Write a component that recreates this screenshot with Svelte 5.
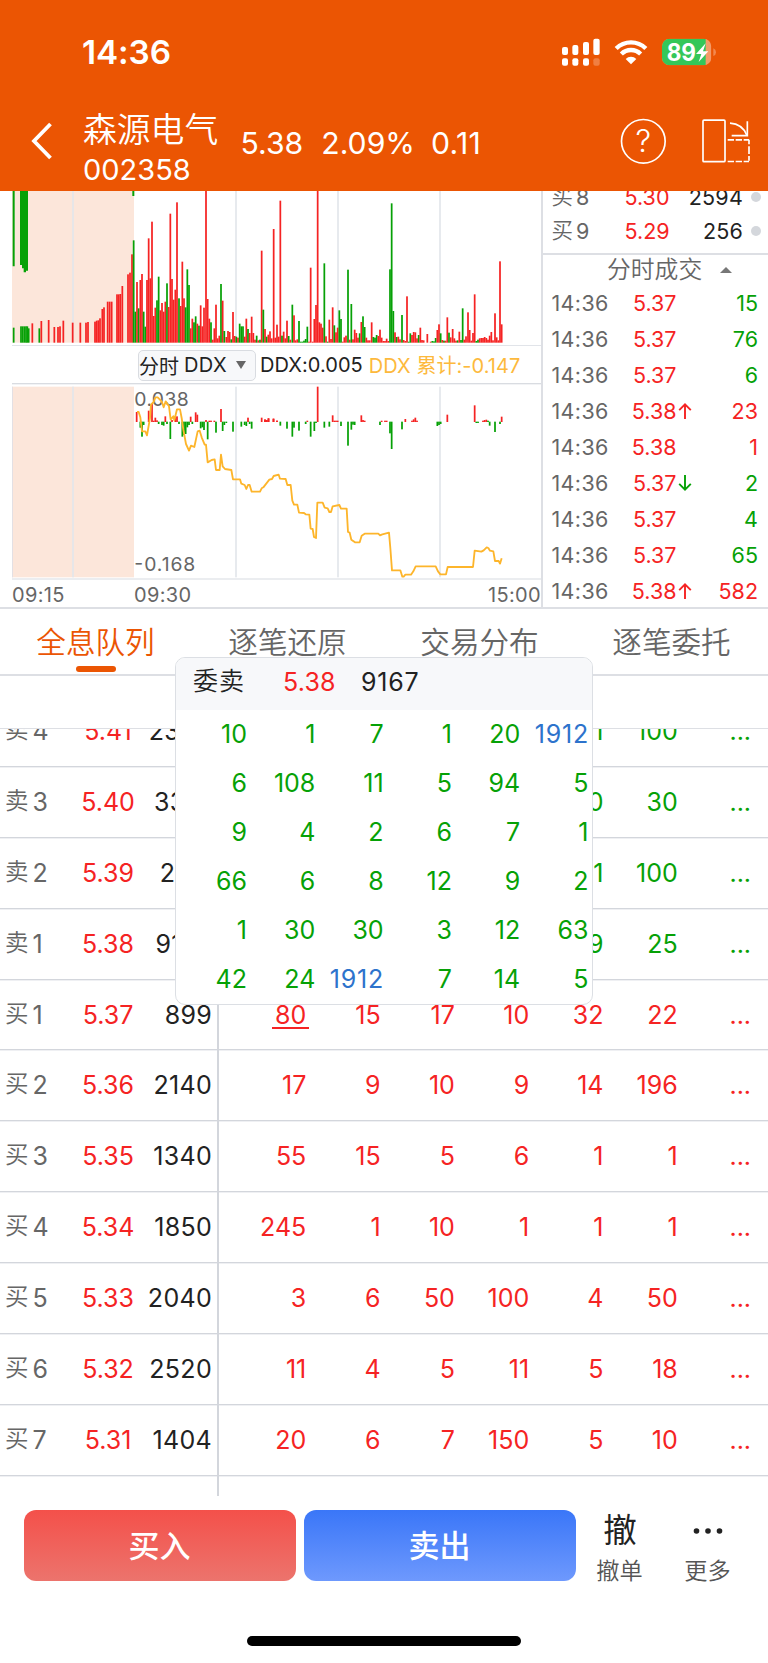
<script>
  const parse = (s) =>
    s.trim().split(/\s+/).map((t) => {
      const m = t.match(/^(\d+):(\d+)([rg])$/);
      return { x: +m[1], y: +m[2], up: m[3] === 'r' };
    });
  const shift = (list, dx) => list.map((b) => ({ ...b, x: b.x + dx }));

  const volume = [
    ...parse(`41:428g 63:424g 68:424g 73:424g 78:424g 82:424g 86:430g 97:415r 118:430g 124:408r 146:405r 163:426r
      174:426r 180:424r 190:407r 218:413r 241:413r 258:413r 264:411r 285:410r 290:407r 295:406r 300:400r 307:372r
      312:367r 323:350r 329:350r 335:350r 351:328r 356:328r 361:327r 367:303r 384:268r 390:263r 396:208r 401:166g
      406:380g 411:291r 416:370g 421:285r 426:267r 431:380g 436:425g 441:285r 446:160r 451:280r 456:110r 461:393r
      466:368r 471:346g 476:275g 481:376r 486:354r 491:380r 496:350r 501:295g 506:366r 511:86r 516:282r 521:344r
      526:314r 531:52r 537:340g 542:363r 547:230r 552:340r 557:367g 562:253g 567:300g 572:430r 577:401r 582:412g
      587:394g 592:416r 597:422g 602:361r 607:424r 612:368r 618:15r 623:342r 628:401r 633:412g 638:464r 643:430r
      648:359r 653:460r 658:452r 663:297g 668:347r 673:438g 679:456r 684:438r 689:441r 694:463g 699:381r 704:453r
      709:455g 714:458r 719:416g 724:424g 729:424g 734:455r 739:401r 744:432g 749:444r 755:395r 760:444r 765:464r
      770:452g 775:466r 780:464g`),
    ...shift(parse(`5:197r 10:374g 15:432r 20:455g 25:449r 30:439r 35:460r 41:132r 46:458r 51:419r 56:455r 61:47r
      66:452g 71:440r 76:460r 81:407r 86:453g 91:464r 97:359g 102:391r 107:466r 112:463r 117:408g 122:470g 127:470g
      132:467g 137:462g 142:425g 147:470r 152:248r 158:470r 163:402r 168:360r 173:15r 178:412r 183:416r 188:428r
      193:235g 198:454r 203:470g 208:404r 213:462r 218:367r 223:421g 228:442r 233:428r 238:376g 243:402g 248:470r
      253:457r 258:452r 264:254g 269:464r 274:357g 279:463r 284:434r 289:444r 294:458r 299:445g 304:411r 309:394g
      314:426g 319:458r 324:466r 329:466r 335:412r 340:456g 345:458g 350:450g 355:453r 360:434r 365:458r 370:468r
      375:468r 380:461r 385:468r 390:253g 395:55g 400:378g 405:442r 410:456g 415:455r 420:463r 426:390g 431:465r
      436:468r 441:334r 446:470g 451:445g 456:450r 461:441r 466:442r 471:460r 476:450g 481:428r 486:465r 491:466r
      502:447r 512:470r 517:468g 522:469g 527:459g 532:435r 537:418r 542:445g 547:465r 552:467g 557:467r 562:397r
      567:443g 572:457r 578:432r 583:460r 588:467r 593:466g 598:440r 603:465g 608:370g 613:464r 618:454r 624:382r
      629:435r 634:467r 639:444r 644:328r 649:468g 654:464g 659:460r 664:459r 669:459r 674:456r 679:459r 684:464r
      689:452r 694:441r 699:466r 705:385r 710:457r 715:466r 720:229r 725:418r`), 780),
  ];

  const ddx = [
    ...parse(`410:112r 421:158g 426:185g 431:150g 446:108r 456:88r 461:138r 466:129r 471:137r 476:147g 486:150g
      491:152g 496:125r 501:147g 511:192g 516:136r 526:127r 531:125r 537:147g 547:185g 552:180g 557:177g 562:157g
      567:150g 572:126r 577:147g 587:113r 592:120r 602:160g 607:157g 612:165g 618:136r 623:193g 628:138r 633:138r
      643:138r 648:173g 663:103r 668:168g 673:150g 679:144g 699:170g 724:155g 734:150g 739:153g 744:129r 749:147g
      755:161g 785:129r 795:134r 800:136r 806:131r 820:132r 831:138r`),
    ...shift(parse(`15:135r 20:136r 25:131r 41:132r 51:138r 61:152g 81:161g 97:185g 102:158g 117:167g 137:147g
      142:138r 152:185g 163:168g 168:144g 173:36r 193:158g 208:155g 218:122r 223:138r 228:138r 233:138r 243:153g
      264:212g 274:164g 279:149g 284:150g 304:122r 309:136r 314:138r 360:150g 365:138r 375:138r 380:138r 390:175g
      395:222g 426:163g 436:133r 456:138r 461:134r 466:129r 471:138r 532:153g 537:150g 542:147g 562:120r 644:92r
      649:144g 654:144g 669:138r 674:136r 679:135r 684:138g 689:152g 705:171g 720:147g 725:126r`), 780),
  ];

  const ddxLine =
    'M411,112 L416,112 421,128 426,170 436,170 441,182 450,130 453,90 461,82 466,68 473,68 485,80 491,98 497,80 507,95 512,135 520,125 523,137 531,104 540,104 545,130 550,165 558,208 567,228 573,213 583,217 593,170 599,168 605,188 614,210 618,210 623,263 635,256 644,254 648,286 659,286 663,240 668,275 675,283 694,286 699,314 720,314 724,327 734,331 739,343 744,331 749,331 755,351 780,351 785,341 790,338 808,315 816,313 821,304 836,300 840,312 857,313 862,331 872,331 877,378 882,390 892,390 897,414 912,415 917,419 928,420 932,462 938,463 942,487 948,490 952,384 968,384 974,399 983,401 988,412 993,412 998,395 1018,391 1023,402 1040,402 1044,472 1049,474 1054,495 1065,503 1079,503 1085,483 1094,477 1135,477 1140,482 1147,479 1167,474 1171,520 1176,587 1201,587 1207,606 1211,606 1216,600 1233,600 1240,590 1247,575 1307,575 1314,590 1321,599 1338,599 1343,577 1419,577 1424,528 1444,531 1451,527 1460,518 1465,520 1470,528 1480,530 1485,559 1496,559 1500,567 1505,551';

  const grid = [219, 708, 1014, 1320];

  const bids = [
    { n: 8, price: '5.30', qty: 2594 },
    { n: 9, price: '5.29', qty: 256 },
  ];

  const trades = [
    { p: '5.37', q: 15, side: 'g' },
    { p: '5.37', q: 76, side: 'g' },
    { p: '5.37', q: 6, side: 'g' },
    { p: '5.38', q: 23, side: 'r', dir: 'up' },
    { p: '5.38', q: 1, side: 'r' },
    { p: '5.37', q: 2, side: 'g', dir: 'down' },
    { p: '5.37', q: 4, side: 'g' },
    { p: '5.37', q: 65, side: 'g' },
    { p: '5.38', q: 582, side: 'r', dir: 'up' },
  ];

  const tabs = ['全息队列', '逐笔还原', '交易分布', '逐笔委托'];

  const queue = [
    { s: '卖', n: 4, p: '5.41', v: '2342', q: ['', '', '', '', 1, 100] },
    { s: '卖', n: 3, p: '5.40', v: '3310', q: ['', '', '', '', 0, 30] },
    { s: '卖', n: 2, p: '5.39', v: '2811', q: ['', '', '', '', 1, 100] },
    { s: '卖', n: 1, p: '5.38', v: '9167', q: ['', '', '', '', 9, 25] },
    { s: '买', n: 1, p: '5.37', v: '899', q: [80, 15, 17, 10, 32, 22] },
    { s: '买', n: 2, p: '5.36', v: '2140', q: [17, 9, 10, 9, 14, 196] },
    { s: '买', n: 3, p: '5.35', v: '1340', q: [55, 15, 5, 6, 1, 1] },
    { s: '买', n: 4, p: '5.34', v: '1850', q: [245, 1, 10, 1, 1, 1] },
    { s: '买', n: 5, p: '5.33', v: '2040', q: [3, 6, 50, 100, 4, 50] },
    { s: '买', n: 6, p: '5.32', v: '2520', q: [11, 4, 5, 11, 5, 18] },
    { s: '买', n: 7, p: '5.31', v: '1404', q: [20, 6, 7, 150, 5, 10] },
  ];

  const orders = [
    10, 1, 7, 1, 20, 1912,
    6, 108, 11, 5, 94, 5,
    9, 4, 2, 6, 7, 1,
    66, 6, 8, 12, 9, 2,
    1, 30, 30, 3, 12, 63,
    42, 24, 1912, 7, 14, 5,
  ];
</script>

<div class="app">
  <header>
    <div class="status">
      <span class="clock">14:36</span>
      <svg width="158" height="32" viewBox="30 30 474 96">
        <g fill="#fff">
          <rect x="36" y="63" width="18" height="24" rx="6" />
          <rect x="67" y="57" width="18" height="30" rx="6" />
          <rect x="99" y="48" width="18" height="39" rx="6" />
          <rect x="130" y="38" width="19" height="49" rx="6" />
          <rect x="36" y="97" width="18" height="22" rx="6" />
          <rect x="67" y="97" width="18" height="22" rx="6" />
          <rect x="99" y="97" width="18" height="22" rx="6" />
          <rect x="130" y="97" width="19" height="22" rx="6" opacity=".25" />
          <path d="M243 115 L227 99 A22 22 0 0 1 259 99 Z" />
        </g>
        <g fill="none" stroke="#fff" stroke-width="13">
          <path d="M198.500 67.500 A63 63 0 0 1 287.500 67.500" />
          <path d="M214 84 A41 41 0 0 1 272 84" />
        </g>
        <clipPath id="batt"><rect x="336" y="38" width="148" height="80" rx="23" /></clipPath>
        <g clip-path="url(#batt)">
          <rect x="336" y="38" width="148" height="80" fill="#f49b68" />
          <rect x="336" y="38" width="131" height="80" fill="#34c759" />
        </g>
        <path d="M490 67 Q498 70 498 78.500 T490 90 Z" fill="#f2894f" />
        <text x="350" y="104" font-size="71" font-weight="700" fill="#fff" textLength="88" lengthAdjust="spacingAndGlyphs">89</text>
        <path d="M467 52 L438 84 H454 L446 108 L475 76 H459 Z" fill="#fff" />
      </svg>
    </div>
    <div class="nav">
      <svg class="back" width="24" height="38" viewBox="0 0 24 38" fill="none" stroke="#fff" stroke-width="3.800">
        <path d="M20.500 2 L4 19 L20.500 36" />
      </svg>
      <div class="stock">
        <div class="name">森源电气</div>
        <div class="code">002358</div>
      </div>
      <div class="quote"><span>5.38</span><span>2.09%</span><span>0.11</span></div>
      <svg class="tools" width="130" height="46" viewBox="210 280 390 138" fill="none" stroke="#fff" stroke-width="5">
        <circle cx="280" cy="350" r="65.500" />
        <text x="280" y="383" font-size="93" font-weight="350" fill="#fff" stroke="none" text-anchor="middle">?</text>
        <rect x="459" y="286.500" width="66" height="124.500" rx="3" />
        <path d="M540 295.500 Q577 298 590 331" />
        <path d="M592 290 V333 H545" />
        <path d="M533 345.500 H597" stroke-dasharray="19 5" />
        <path d="M533 410.500 H597" stroke-dasharray="19 5" />
        <path d="M597 345 V413" stroke-dasharray="14 6 23 6" />
      </svg>
    </div>
  </header>

  <section class="market">
    <div class="charts">
      <svg width="542" height="155" viewBox="0 18 1626 465">
        <rect x="36" y="15" width="366" height="458" fill="#fce6da" />
        {#each grid as x}<rect x={x - 2.5} y="15" width="5" height="458" fill="#e3e6eb" />{/each}
        <path d="M38 15h6v229h-6z M60 15h24v242h-6v5h-7v-12h-5v-10h-6z M397 15h6v18h-6z" fill="#06a106" />
        {#each volume as b}
          <rect x={b.x - 2.6} y={b.y} width="5.200" height={473 - b.y} fill={b.up ? '#f52323' : '#06a106'} />
        {/each}
        <rect x="36" y="480" width="1590" height="3" fill="#e1e4e9" />
      </svg>
      <div class="ddx-row">
        <div class="select">分时<span>DDX</span><i></i></div>
        <span class="dark">DDX:0.005</span>
        <span class="gold">DDX 累计:-0.147</span>
      </div>
      <svg width="542" height="197" viewBox="0 25 1626 591">
        <rect x="36" y="25" width="1590" height="4" fill="#d9dce1" />
        <rect x="36" y="36" width="366" height="572" fill="#fce6da" />
        <rect x="36" y="36" width="3" height="572" fill="#e3e0e4" />
        {#each grid as x}<rect x={x - 2.5} y="36" width="5" height="572" fill="#e3e6eb" />{/each}
        <g font-size="58" fill="#666">
          <text x="403" y="94" textLength="163">0.038</text>
          <text x="403" y="590" textLength="183">-0.168</text>
        </g>
        {#each ddx as b}
          <rect x={b.x - 2.6} y={Math.min(b.y, 141)} width="5.200" height={Math.abs(141 - b.y) + 1} fill={b.up ? '#f52323' : '#06a106'} />
        {/each}
        <path d={ddxLine} fill="none" stroke="#fdb52b" stroke-width="5.500" stroke-linejoin="round" />
        <rect x="36" y="611" width="1590" height="4" fill="#e1e4e9" />
      </svg>
      <div class="times"><span>09:15</span><span>09:30</span><span>15:00</span></div>
    </div>

    <div class="tape">
      <div class="bids">
        {#each bids as b}
          <div class="bid"><span class="lbl"><em>买</em><b>{b.n}</b></span><span class="pr">{b.price}</span><span class="qt">{b.qty}</span><i></i></div>
        {/each}
      </div>
      <div class="tape-title">分时成交<i></i></div>
      {#each trades as t}
        <div class="trade">
          <span class="tm">14:36</span>
          <span class="pr">{t.p}</span>
          <span class="ar">
            {#if t.dir}
              <svg class={t.dir} width="14" height="16" viewBox="0 0 14 16" fill="none" stroke-width="1.900">
                <path d="M7 16 V1.500 M1.200 7.200 L7 1.400 L12.800 7.200" />
              </svg>
            {/if}
          </span>
          <span class="qt {t.side}">{t.q}</span>
        </div>
      {/each}
    </div>
  </section>

  <nav class="tabs">
    {#each tabs as t, i}<div class="tab" class:on={i === 0}>{t}</div>{/each}
  </nav>

  <section class="board">
    <div class="spacer"></div>
    <div class="queue">
      <div class="rows">
        {#each queue as r}
          <div class="row">
            <div class="lead">
              <span class="lbl"><em>{r.s}</em><b>{r.n}</b></span><span class="pr">{r.p}</span><span class="vol">{r.v}</span>
            </div>
            <div class="cells {r.s === '卖' ? 'g' : 'r'}">
              {#each r.q as c}<span class:mine={c === 80}>{c}</span>{/each}
              <span class="more">...</span>
            </div>
          </div>
        {/each}
        <div class="row"><div class="lead"></div></div>
      </div>
    </div>

    <div class="popup">
      <div class="pop-head"><span class="pl">委卖</span><span class="pp">5.38</span><span class="pv">9167</span></div>
      <div class="pop-grid">
        {#each orders as o}<span class:big={o > 1000}>{o}</span>{/each}
      </div>
    </div>
  </section>

  <footer>
    <div class="actions">
      <button class="buy"><span>买入</span></button>
      <button class="sell"><span>卖出</span></button>
      <div class="act"><span class="ico">撤</span><span class="cap">撤单</span></div>
      <div class="act">
        <svg class="ico" width="32" height="44" viewBox="0 0 32 44" fill="#222">
          <circle cx="4.500" cy="21" r="2.800" /><circle cx="16" cy="21" r="2.800" /><circle cx="27.500" cy="21" r="2.800" />
        </svg>
        <span class="cap">更多</span>
      </div>
    </div>
    <div class="home"></div>
  </footer>
</div>

<style>
  :global(body) { margin: 0; background: #fff; }
  .app {
    width: 768px; height: 1663px; overflow: hidden; background: #fff; color: #222;
    font-family: Inter, "Noto Sans CJK SC", sans-serif;
    display: flex; flex-direction: column;
  }
  .app * { box-sizing: border-box; }
  svg { display: block; flex: none; }
  b { font-weight: inherit; }
  em { font-style: normal; }
  .r { color: #f52323; }
  .g { color: #06a106; }

  header { height: 191px; flex: none; background: #eb5503; color: #fff; }
  .status { height: 103px; padding: 0 54px 0 82px; display: flex; justify-content: space-between; align-items: center; }
  .status svg { margin-right: -4px; }
  .clock { font-size: 33.300px; font-weight: 600; letter-spacing: -.1px; }
  .nav { height: 88px; display: flex; align-items: flex-start; padding-left: 30px; }
  .back { margin-top: 19px; }
  .stock { width: 157.500px; margin-left: 29px; }
  .name { font-size: 33.800px; line-height: 44px; font-weight: 350; padding-top: 5px; white-space: nowrap; }
  .code { font-size: 29px; line-height: 32px; margin-top: 2px; }
  .quote { display: flex; gap: 18px; font-size: 30.200px; line-height: 40px; padding-top: 20px; width: 379.500px; }
  .quote span:last-child { letter-spacing: .3px; margin-left: -2px; }
  .tools { margin-top: 15px; }

  .market { height: 418px; flex: none; display: flex; border-bottom: 2px solid #dddfe4; }
  .charts { width: 542px; flex: none; }
  .ddx-row { height: 37px; padding: 1px 0 0 138px; display: flex; align-items: center; font-size: 20px; white-space: nowrap; }
  .select { width: 118px; height: 31px; border: 1px solid #d9dce1; border-radius: 5px; background: #f7f8fa; display: flex; align-items: center; margin-right: 4px; font-size: 20px; }
  .select span { margin-left: 5px; letter-spacing: .4px; }
  .select i { border: 5px solid transparent; border-top: 8px solid #666; border-bottom: 0; margin-left: 9px; }
  .dark { margin-right: 6px; letter-spacing: .05px; }
  .gold { color: #fdb93c; letter-spacing: .05px; position: relative; top: -1px; }
  .times { height: 27px; display: grid; grid-template-columns: 122px 1fr auto; padding: 0 1px 0 12px; font-size: 20px; line-height: 30px; letter-spacing: .35px; color: #666; }
  .tape { flex: 1; margin-left: -1px; border-left: 2px solid #dddfe4; font-size: 21.500px; overflow: hidden; }
  .bids { height: 64px; display: flex; flex-direction: column; justify-content: flex-end; padding-bottom: 4.500px; border-bottom: 2px solid #dddfe4; }
  .bid { height: 34.500px; flex: none; display: flex; align-items: center; padding-left: 8.500px; }
  .lbl { color: #666; font-weight: 350; display: flex; align-items: center; line-height: 32px; }
  .lbl b { margin-left: 4px; font-weight: 400; }
  .lbl em { position: relative; top: -1px; }
  .bid .lbl { width: 73px; font-size: 21.500px; }
  .bid .lbl b { margin-left: 3px; }
  .pr { color: #f52323; }
  .bid .qt { flex: 1; text-align: right; letter-spacing: .2px; }
  .bid i { width: 10px; height: 10px; border-radius: 50%; background: #d4d7dc; margin: 0 7px 0 8px; }
  .tape-title { height: 30px; display: flex; align-items: center; padding: 0 0 1px 64px; font-size: 23.800px; font-weight: 350; color: #666; line-height: 26px; }
  .tape-title i { border: 6px solid transparent; border-bottom: 6.500px solid #777; border-top: 0; margin: 1px 0 0 18px; }
  .trade { height: 36px; display: grid; grid-template-columns: 60px 65px 20px 1fr; align-items: center; padding: 0 10px 0 8.500px; }
  .trade .tm { color: #666; letter-spacing: .35px; }
  .trade .pr, .trade .qt { text-align: right; }
  .ar svg { margin-left: 1px; stroke: #f52323; }
  .ar .down { transform: rotate(180deg); stroke: #06a106; }

  .tabs { height: 67px; flex: none; display: grid; grid-template-columns: repeat(4, 192px); border-bottom: 2px solid #dddfe4; }
  .tab { display: flex; flex-direction: column; align-items: center; font-size: 29.600px; line-height: 57px; height: 65px; margin-left: -1px; padding-top: 5px; color: #666; font-weight: 350; }
  .on { color: #eb5503; }
  .on::after { content: ""; width: 40px; height: 6px; border-radius: 3px; background: #eb5503; margin-top: -5px; }

  .board { position: relative; height: 820px; flex: none; }
  .spacer { height: 53px; border-bottom: 1px solid #dddfe4; }
  .queue { height: 767px; overflow: hidden; }
  .rows { margin-top: -33px; }
  .row { height: 70.900px; display: flex; align-items: stretch; border-bottom: 1px solid #d3d6dc; font-size: 25px; }
  .row:nth-child(-n+11) { box-shadow: 0 1px 0 #eff0f3; }
  .lead { width: 219px; border-right: 2px solid #d3d6dc; display: grid; grid-template-columns: 76px 54px 1fr; align-items: center; padding: 0 5px 0 5px; }
  .lead .lbl { font-size: 23.500px; }
  .lead .lbl b { font-size: 25px; margin-left: 4px; }
  .lead .pr { text-align: center; }
  .lead .vol { text-align: right; letter-spacing: .3px; }
  .cells { display: grid; grid-template-columns: 87.300px repeat(6, 74.300px); align-items: center; text-align: right; }
  .more { padding-right: 1px; }
  .mine { justify-self: end; border-bottom: 2px solid #f52323; line-height: 24px; padding: 1px 3px 0; margin: 1px -3px 0 0; }

  .popup { position: absolute; left: 175px; top: -19px; width: 418px; height: 348px; border: 1.500px solid #dcdfe4; border-radius: 10px; background: #fff; overflow: hidden; font-size: 25px; }
  .pop-head { height: 52px; background: #f7f8fa; display: flex; align-items: center; padding: 0 0 5px 17px; }
  .pl { width: 90px; font-weight: 350; letter-spacing: 1px; line-height: 30px; position: relative; top: -1px; }
  .pp { width: 78px; color: #f52323; letter-spacing: .2px; }
  .pv { letter-spacing: .8px; }
  .pop-grid { display: grid; grid-template-columns: 71px repeat(5, 68.300px); grid-auto-rows: 49.150px; align-items: center; text-align: right; color: #06a106; margin-top: -1px; }
  .big { color: #2d73cc; letter-spacing: .8px; margin: 0 -.5px 0 -4px; }

  footer { flex: 1; padding-top: 14px; display: flex; flex-direction: column; align-items: center; background: #fff; }
  .actions { width: 768px; display: flex; padding-left: 24px; gap: 8px; height: 71px; }
  button { width: 272px; border: 0; border-radius: 12px; color: #fff; font: 500 31px Inter, "Noto Sans CJK SC", sans-serif; padding: 0 1px 4px 0; }
  .buy { background: linear-gradient(#f4504a, #ec746d); }
  .sell { background: linear-gradient(#3a76f8, #6e99fd); }
  .act { width: 72px; display: flex; flex-direction: column; align-items: center; }
  .act + .act { margin-left: 8px; }
  .ico { font-size: 33.500px; height: 44px; line-height: 41px; flex: none; }
  .cap { font-size: 23.200px; line-height: 32px; color: #555; font-weight: 350; flex: none; position: relative; top: 1px; left: -.5px; }
  .home { width: 274px; height: 10px; border-radius: 5px; background: #000; margin-top: 55px; }
</style>
